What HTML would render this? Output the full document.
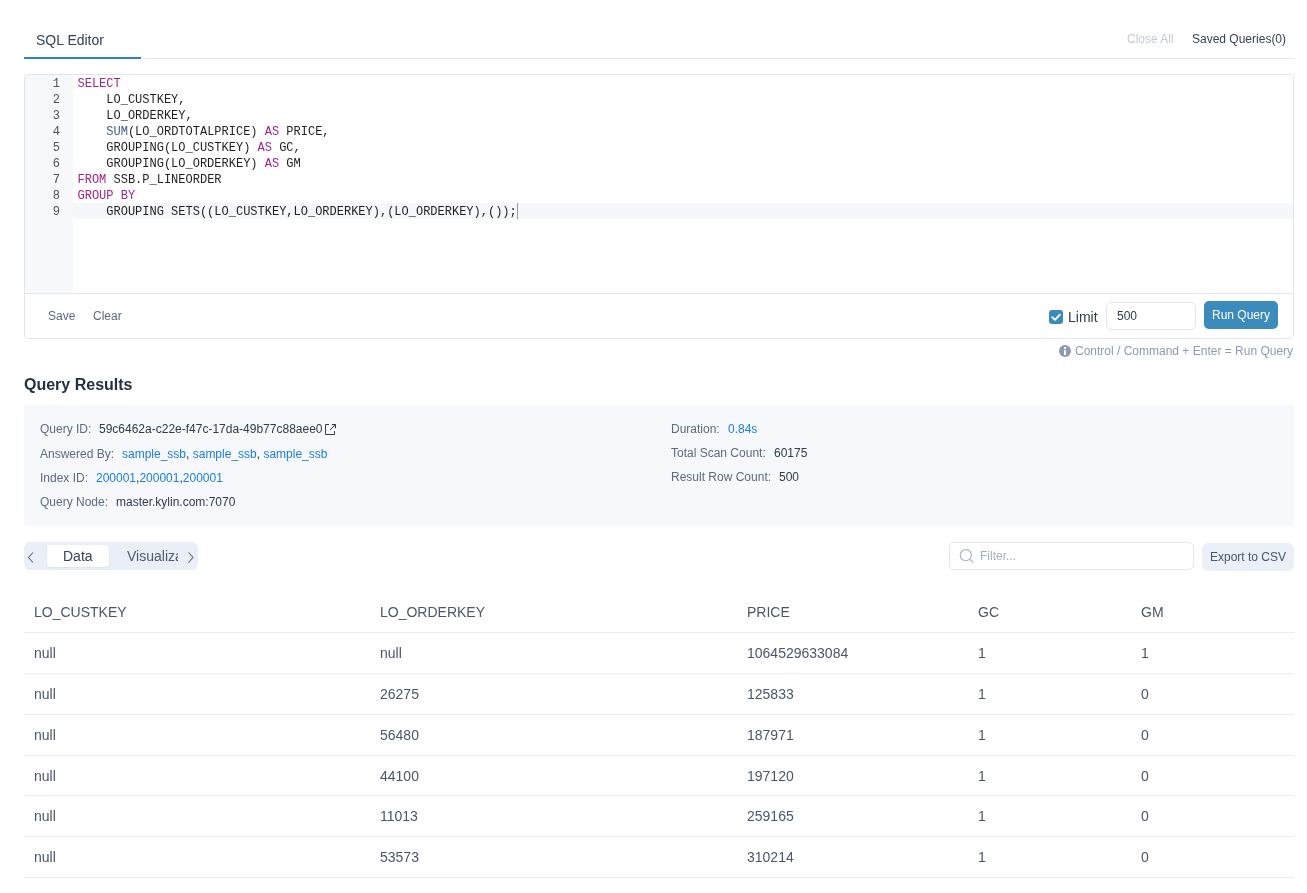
<!DOCTYPE html>
<html><head><meta charset="utf-8">
<style>
*{box-sizing:border-box;margin:0;padding:0}
html,body{width:1307px;height:893px;overflow:hidden;background:#fff}
body{position:relative;font-family:"Liberation Sans",sans-serif;color:#343f50}
.a{position:absolute;white-space:nowrap}
.t12{font-size:12px;line-height:16px}
.t14{font-size:14px;line-height:18px}
/* tabs */
#tabline{left:24px;top:58px;width:1270px;height:1px;background:#e4e9f1}
#tabul{left:24px;top:57px;width:117px;height:2px;background:#2f86bf}
/* editor */
#editor{left:24px;top:74px;width:1270px;height:265px;border:1px solid #dfe5ee;border-radius:4px;overflow:hidden}
#gutter{position:absolute;left:0;top:0;width:48px;height:218px;background:#f7f8fa}
#code{position:absolute;left:48px;top:0;right:0;height:218px;font-family:"Liberation Mono",monospace;font-size:12px;line-height:16px;color:#1f1f1f}
.ln{position:absolute;left:0;width:35px;margin-top:1px;text-align:right;font-family:"Liberation Mono",monospace;font-size:12px;line-height:16px;color:#505050}
.cl{position:absolute;left:4.5px;margin-top:1px;white-space:pre}
.kw{color:#a0228c}
.fn{color:#475a85}
#active{position:absolute;left:0;right:0;top:128px;height:16px;background:#f5f7fa}
#foot{position:absolute;left:0;right:0;top:218px;height:1px;background:#e4e9f1}
.lk{color:#1a7fe0}
.row{position:absolute;left:0;width:1270px;height:41px;border-bottom:1px solid #e8edf5}
.c{position:absolute;top:0;font-size:14px;line-height:40px;color:#4a566a;white-space:nowrap}
.c1{left:10px}.c2{left:356px}.c3{left:723px}.c4{left:954px}.c5{left:1117px}
</style></head><body><div id="wrap" style="position:absolute;left:0;top:0;width:1307px;height:893px;will-change:transform">

<div class="a t14" style="left:36px;top:31px;color:#36425a">SQL Editor</div>
<div class="a" id="tabline"></div>
<div class="a" id="tabul"></div>
<div class="a t12" style="left:1127px;top:31px;color:#c4cad3">Close All</div>
<div class="a t12" style="left:1192px;top:31px;color:#36425a">Saved Queries(0)</div>

<div class="a" id="editor">
  <div id="gutter">
    <div class="ln" style="top:0">1</div>
    <div class="ln" style="top:16px">2</div>
    <div class="ln" style="top:32px">3</div>
    <div class="ln" style="top:48px">4</div>
    <div class="ln" style="top:64px">5</div>
    <div class="ln" style="top:80px">6</div>
    <div class="ln" style="top:96px">7</div>
    <div class="ln" style="top:112px">8</div>
    <div class="ln" style="top:128px">9</div>
  </div>
  <div id="code">
    <div id="active"></div>
    <div class="cl" style="top:0"><span class="kw">SELECT</span></div>
    <div class="cl" style="top:16px">    LO_CUSTKEY,</div>
    <div class="cl" style="top:32px">    LO_ORDERKEY,</div>
    <div class="cl" style="top:48px">    <span class="fn">SUM</span>(LO_ORDTOTALPRICE) <span class="kw">AS</span> PRICE,</div>
    <div class="cl" style="top:64px">    GROUPING(LO_CUSTKEY) <span class="kw">AS</span> GC,</div>
    <div class="cl" style="top:80px">    GROUPING(LO_ORDERKEY) <span class="kw">AS</span> GM</div>
    <div class="cl" style="top:96px"><span class="kw">FROM</span> SSB.P_LINEORDER</div>
    <div class="cl" style="top:112px"><span class="kw">GROUP</span> <span class="kw">BY</span></div>
    <div class="cl" style="top:128px">    GROUPING SETS((LO_CUSTKEY,LO_ORDERKEY),(LO_ORDERKEY),());</div>
  </div>
  <div id="foot"></div>
</div>
<div class="a" style="left:517px;top:203px;width:1px;height:16px;background:#9a9a9a"></div>
<!-- footer -->
<div class="a t12" style="left:48px;top:308px;color:#5c6a80">Save</div>
<div class="a t12" style="left:93px;top:308px;color:#5c6a80">Clear</div>
<div class="a" style="left:1049px;top:310px;width:14px;height:14px;border-radius:3px;background:#3b8bbd">
  <svg width="14" height="14" viewBox="0 0 14 14" style="position:absolute;left:0;top:0"><path d="M3.2 7.2 L6 9.8 L10.8 4.6" fill="none" stroke="#fff" stroke-width="1.8" stroke-linecap="round" stroke-linejoin="round"/></svg>
</div>
<div class="a t14" style="left:1068px;top:308px;color:#2f3a4d">Limit</div>
<div class="a" style="left:1106px;top:302px;width:90px;height:28px;border:1px solid #e1e6ee;border-radius:5px;background:#fff"></div>
<div class="a t12" style="left:1117px;top:308px;color:#2f3a4d">500</div>
<div class="a" style="left:1204px;top:301px;width:74px;height:28px;border-radius:5px;background:#3b8bbd"></div>
<div class="a t12" style="left:1212px;top:307px;color:#fff">Run Query</div>
<!-- hint -->
<div class="a" style="left:1059px;top:345px;width:12px;height:12px;border-radius:50%;background:#8d9bb0"></div>
<div class="a" style="left:1064px;top:347px;width:2px;height:2px;background:#fff"></div>
<div class="a" style="left:1064px;top:350px;width:2px;height:5px;background:#fff"></div>
<div class="a t12" style="left:1075px;top:343px;color:#8d9bb0">Control / Command + Enter = Run Query</div>

<!-- results -->
<div class="a" style="left:24px;top:375px;font-size:16px;line-height:20px;font-weight:bold;color:#243042">Query Results</div>
<div class="a" style="left:24px;top:405px;width:1270px;height:121px;background:#f6f8fb"></div>
<div class="a t12" style="left:40px;top:421px;color:#5c6a80">Query ID:</div>
<div class="a t12" style="left:99px;top:421px;color:#2f3a4d">59c6462a-c22e-f47c-17da-49b77c88aee0</div>
<svg class="a" style="left:324px;top:423px" width="13" height="13" viewBox="0 0 13 13"><path d="M5 1.5 H1.5 V11.5 H10.5 V8" fill="none" stroke="#2f3a4d" stroke-width="1"/><path d="M7.8 1.5 H11.5 V5.2 M11.3 1.7 L6 7" fill="none" stroke="#2f3a4d" stroke-width="1"/></svg>
<div class="a t12" style="left:40px;top:446px;color:#5c6a80">Answered By:</div>
<div class="a t12" style="left:122px;top:446px;color:#2f3a4d"><span class="lk">sample_ssb</span>, <span class="lk">sample_ssb</span>, <span class="lk">sample_ssb</span></div>
<div class="a t12" style="left:40px;top:470px;color:#5c6a80">Index ID:</div>
<div class="a t12" style="left:96px;top:470px;color:#2f3a4d"><span class="lk">200001</span>,<span class="lk">200001</span>,<span class="lk">200001</span></div>
<div class="a t12" style="left:40px;top:494px;color:#5c6a80">Query Node:</div>
<div class="a t12" style="left:116px;top:494px;color:#2f3a4d">master.kylin.com:7070</div>

<div class="a t12" style="left:671px;top:421px;color:#5c6a80">Duration:</div>
<div class="a t12 lk" style="left:728px;top:421px">0.84s</div>
<div class="a t12" style="left:671px;top:445px;color:#5c6a80">Total Scan Count:</div>
<div class="a t12" style="left:774px;top:445px;color:#2f3a4d">60175</div>
<div class="a t12" style="left:671px;top:469px;color:#5c6a80">Result Row Count:</div>
<div class="a t12" style="left:779px;top:469px;color:#2f3a4d">500</div>

<!-- toolbar -->
<div class="a" style="left:24px;top:542px;width:174px;height:28px;border-radius:6px;background:#e9eef7"></div>
<div class="a" style="left:47px;top:545px;width:62px;height:22px;border-radius:4px;background:#fff;box-shadow:0 1px 2px rgba(60,80,120,.08)"></div>
<svg class="a" style="left:26px;top:550px" width="10" height="14" viewBox="0 0 10 14"><path d="M7 2.5 L2.5 7.5 L7 12.5" fill="none" stroke="#5c6a80" stroke-width="1.1"/></svg>
<div class="a t14" style="left:63px;top:547px;color:#36425a">Data</div>
<div class="a" style="left:127px;top:547px;width:51px;overflow:hidden;font-size:14px;line-height:18px;color:#4d5a6e">Visualization</div>
<svg class="a" style="left:186px;top:550px" width="10" height="14" viewBox="0 0 10 14"><path d="M2.5 2.5 L7 7.5 L2.5 12.5" fill="none" stroke="#5c6a80" stroke-width="1.1"/></svg>

<div class="a" style="left:949px;top:542px;width:245px;height:28px;border:1px solid #e1e6ee;border-radius:5px;background:#fff"></div>
<svg class="a" style="left:958px;top:548px" width="18" height="18" viewBox="0 0 18 18"><circle cx="7.8" cy="7.2" r="5.6" fill="none" stroke="#a6b1c2" stroke-width="1.1"/><path d="M11.8 11.3 L15.2 14.7" stroke="#a6b1c2" stroke-width="1.1"/></svg>
<div class="a t12" style="left:980px;top:548px;color:#a6b1c2">Filter...</div>
<div class="a" style="left:1202px;top:543px;width:92px;height:28px;border-radius:6px;background:#ebeff7"></div>
<div class="a t12" style="left:1210px;top:549px;color:#48556a">Export to CSV</div>

<!-- table -->
<div id="tbl" class="a" style="left:24px;top:592px;width:1270px">
<div class="row" style="top:0px"><div class="c c1">LO_CUSTKEY</div><div class="c c2">LO_ORDERKEY</div><div class="c c3">PRICE</div><div class="c c4">GC</div><div class="c c5">GM</div></div>
<div class="row" style="top:41px"><div class="c c1">null</div><div class="c c2">null</div><div class="c c3">1064529633084</div><div class="c c4">1</div><div class="c c5">1</div></div>
<div class="row" style="top:82px"><div class="c c1">null</div><div class="c c2">26275</div><div class="c c3">125833</div><div class="c c4">1</div><div class="c c5">0</div></div>
<div class="row" style="top:123px"><div class="c c1">null</div><div class="c c2">56480</div><div class="c c3">187971</div><div class="c c4">1</div><div class="c c5">0</div></div>
<div class="row" style="top:164px;height:40px"><div class="c c1">null</div><div class="c c2">44100</div><div class="c c3">197120</div><div class="c c4">1</div><div class="c c5">0</div></div>
<div class="row" style="top:204px"><div class="c c1">null</div><div class="c c2">11013</div><div class="c c3">259165</div><div class="c c4">1</div><div class="c c5">0</div></div>
<div class="row" style="top:245px"><div class="c c1">null</div><div class="c c2">53573</div><div class="c c3">310214</div><div class="c c4">1</div><div class="c c5">0</div></div>
</div>

</div></body></html>
